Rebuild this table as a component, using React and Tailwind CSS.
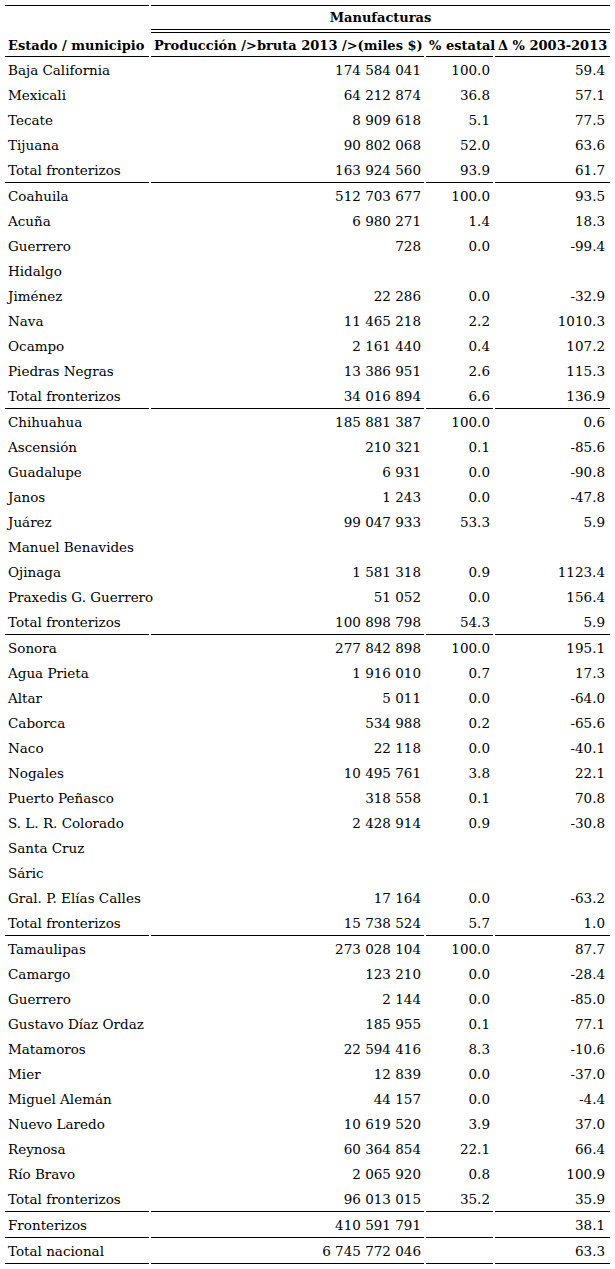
import React from "react";

const groups = [
  [
    ["Baja California", "174 584 041", "100.0", "59.4"],
    ["Mexicali", "64 212 874", "36.8", "57.1"],
    ["Tecate", "8 909 618", "5.1", "77.5"],
    ["Tijuana", "90 802 068", "52.0", "63.6"],
    ["Total fronterizos", "163 924 560", "93.9", "61.7"],
  ],
  [
    ["Coahuila", "512 703 677", "100.0", "93.5"],
    ["Acuña", "6 980 271", "1.4", "18.3"],
    ["Guerrero", "728", "0.0", "-99.4"],
    ["Hidalgo", "", "", ""],
    ["Jiménez", "22 286", "0.0", "-32.9"],
    ["Nava", "11 465 218", "2.2", "1010.3"],
    ["Ocampo", "2 161 440", "0.4", "107.2"],
    ["Piedras Negras", "13 386 951", "2.6", "115.3"],
    ["Total fronterizos", "34 016 894", "6.6", "136.9"],
  ],
  [
    ["Chihuahua", "185 881 387", "100.0", "0.6"],
    ["Ascensión", "210 321", "0.1", "-85.6"],
    ["Guadalupe", "6 931", "0.0", "-90.8"],
    ["Janos", "1 243", "0.0", "-47.8"],
    ["Juárez", "99 047 933", "53.3", "5.9"],
    ["Manuel Benavides", "", "", ""],
    ["Ojinaga", "1 581 318", "0.9", "1123.4"],
    ["Praxedis G. Guerrero", "51 052", "0.0", "156.4"],
    ["Total fronterizos", "100 898 798", "54.3", "5.9"],
  ],
  [
    ["Sonora", "277 842 898", "100.0", "195.1"],
    ["Agua Prieta", "1 916 010", "0.7", "17.3"],
    ["Altar", "5 011", "0.0", "-64.0"],
    ["Caborca", "534 988", "0.2", "-65.6"],
    ["Naco", "22 118", "0.0", "-40.1"],
    ["Nogales", "10 495 761", "3.8", "22.1"],
    ["Puerto Peñasco", "318 558", "0.1", "70.8"],
    ["S. L. R. Colorado", "2 428 914", "0.9", "-30.8"],
    ["Santa Cruz", "", "", ""],
    ["Sáric", "", "", ""],
    ["Gral. P. Elías Calles", "17 164", "0.0", "-63.2"],
    ["Total fronterizos", "15 738 524", "5.7", "1.0"],
  ],
  [
    ["Tamaulipas", "273 028 104", "100.0", "87.7"],
    ["Camargo", "123 210", "0.0", "-28.4"],
    ["Guerrero", "2 144", "0.0", "-85.0"],
    ["Gustavo Díaz Ordaz", "185 955", "0.1", "77.1"],
    ["Matamoros", "22 594 416", "8.3", "-10.6"],
    ["Mier", "12 839", "0.0", "-37.0"],
    ["Miguel Alemán", "44 157", "0.0", "-4.4"],
    ["Nuevo Laredo", "10 619 520", "3.9", "37.0"],
    ["Reynosa", "60 364 854", "22.1", "66.4"],
    ["Río Bravo", "2 065 920", "0.8", "100.9"],
    ["Total fronterizos", "96 013 015", "35.2", "35.9"],
  ],
  [["Fronterizos", "410 591 791", "", "38.1"]],
  [["Total nacional", "6 745 772 046", "", "63.3"]],
];

function Row({ r, last }) {
  const b = last ? "border-b border-black" : "";
  return (
    <tr>
      <td className={`px-[3px] py-0 leading-[23px] text-left whitespace-nowrap ${b}`}>{r[0]}</td>
      <td className={`px-[3px] py-0 leading-[23px] text-right whitespace-nowrap ${b}`}>{r[1]}</td>
      <td className={`px-[3px] py-0 leading-[23px] text-right whitespace-nowrap ${b}`}>{r[2]}</td>
      <td className={`pl-[3px] pr-[5px] py-0 leading-[23px] text-right whitespace-nowrap ${b}`}>{r[3]}</td>
    </tr>
  );
}

export default function App() {
  return (
    <div className="bg-white p-[3px] w-[615px] font-['DejaVu_Serif',serif]">
      <table className="w-full table-fixed border-separate border-spacing-[2px] text-[13.5px] text-black font-['DejaVu_Serif',serif]">
        <colgroup>
          <col className="w-[144px]" />
          <col className="w-[273px]" />
          <col className="w-[67px]" />
          <col className="w-[115px]" />
        </colgroup>
        <thead className="font-bold text-[13px]">
          <tr>
            <th
              rowSpan={2}
              className="px-[3px] py-0 align-bottom text-left whitespace-nowrap border-t border-b border-black leading-[21px] font-bold"
            >
              Estado / municipio
            </th>
            <th
              colSpan={3}
              className="px-[3px] py-0 text-center border-t border-b-4 border-double border-black leading-[23px] font-bold"
            >
              Manufacturas
            </th>
          </tr>
          <tr>
            <th className="px-[3px] py-0 text-left whitespace-nowrap border-b border-black leading-[21px] font-bold">
              Producción /&gt;bruta 2013 /&gt;(miles $)
            </th>
            <th className="px-[3px] py-0 text-left whitespace-nowrap border-b border-black leading-[21px] font-bold">
              % estatal
            </th>
            <th className="px-[3px] py-0 text-left whitespace-nowrap border-b border-black leading-[21px] font-bold">
              Δ % 2003-2013
            </th>
          </tr>
        </thead>
        <tbody>
          {groups.map((g, gi) =>
            g.map((r, ri) => <Row key={`${gi}-${ri}`} r={r} last={ri === g.length - 1} />)
          )}
        </tbody>
      </table>
    </div>
  );
}
